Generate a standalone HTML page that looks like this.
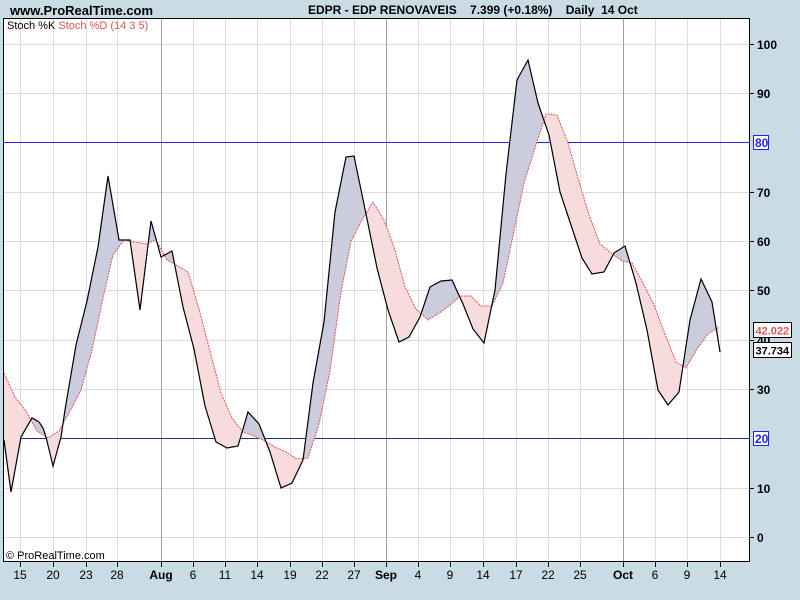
<!DOCTYPE html>
<html><head><meta charset="utf-8"><style>
html,body{margin:0;padding:0;background:#c9dce5;}
svg{display:block;font-family:"Liberation Sans",Arial,sans-serif;}
</style></head><body>
<svg width="800" height="600" viewBox="0 0 800 600" xmlns="http://www.w3.org/2000/svg">
<rect width="800" height="600" fill="#c9dce5"/>
<text x="10" y="15" font-size="13" font-weight="bold" fill="#000">www.ProRealTime.com</text>
<text x="308" y="14" font-size="12" font-weight="bold" fill="#000" xml:space="preserve">EDPR - EDP RENOVAVEIS    7.399 (+0.18%)    Daily  14 Oct</text>
<rect x="3.5" y="18.5" width="746" height="543" fill="#fff" stroke="#000"/>
<g stroke="#dcdcdc" stroke-width="1">
<line x1="4" x2="749" y1="44.5" y2="44.5"/><line x1="4" x2="749" y1="93.5" y2="93.5"/><line x1="4" x2="749" y1="192.5" y2="192.5"/><line x1="4" x2="749" y1="241.5" y2="241.5"/><line x1="4" x2="749" y1="290.5" y2="290.5"/><line x1="4" x2="749" y1="340.5" y2="340.5"/><line x1="4" x2="749" y1="389.5" y2="389.5"/><line x1="4" x2="749" y1="488.5" y2="488.5"/><line x1="4" x2="749" y1="537.5" y2="537.5"/>
<line x1="20.5" x2="20.5" y1="19" y2="561"/><line x1="53.5" x2="53.5" y1="19" y2="561"/><line x1="86.5" x2="86.5" y1="19" y2="561"/><line x1="117.5" x2="117.5" y1="19" y2="561"/><line x1="193.5" x2="193.5" y1="19" y2="561"/><line x1="225.5" x2="225.5" y1="19" y2="561"/><line x1="257.5" x2="257.5" y1="19" y2="561"/><line x1="290.5" x2="290.5" y1="19" y2="561"/><line x1="322.5" x2="322.5" y1="19" y2="561"/><line x1="354.5" x2="354.5" y1="19" y2="561"/><line x1="418.5" x2="418.5" y1="19" y2="561"/><line x1="450.5" x2="450.5" y1="19" y2="561"/><line x1="483.5" x2="483.5" y1="19" y2="561"/><line x1="516.5" x2="516.5" y1="19" y2="561"/><line x1="548.5" x2="548.5" y1="19" y2="561"/><line x1="580.5" x2="580.5" y1="19" y2="561"/><line x1="655.5" x2="655.5" y1="19" y2="561"/><line x1="687.5" x2="687.5" y1="19" y2="561"/><line x1="720.5" x2="720.5" y1="19" y2="561"/>
</g>
<g stroke="#a0a0a0"><line x1="161.5" x2="161.5" y1="19" y2="561"/><line x1="386.5" x2="386.5" y1="19" y2="561"/><line x1="623.5" x2="623.5" y1="19" y2="561"/></g>
<line x1="4" x2="749" y1="142.5" y2="142.5" stroke="#2222ee"/>
<line x1="4" x2="749" y1="438.5" y2="438.5" stroke="#2a2a80"/>
<defs>
<clipPath id="aboveD"><polygon points="4,0 4,373 15,397 26,411 37,431 48,438 59,431 70,411 81,390 92,350 103,298 113,255 124,240 135,242 146,244 156,240 167,260 178,266 188,272 199,309 210,351 221,393 232,418 243,432 254,436 265,441 275,447 286,452 297,459 308,458 319,424 330,371 341,292 351,241 362,220 373,202 384,220 395,250 405,287 416,309 428,320 438,314 449,306 460,296 471,296 481,306 492,306 503,283 514,231 524,183 535,148 546,114 557,115 568,143 578,178 589,215 600,244 611,253 622,261 632,263 643,283 654,305 665,334 676,362 686,368 697,349 708,334 719,327 719,0"/></clipPath>
<clipPath id="belowD"><polygon points="4,600 4,373 15,397 26,411 37,431 48,438 59,431 70,411 81,390 92,350 103,298 113,255 124,240 135,242 146,244 156,240 167,260 178,266 188,272 199,309 210,351 221,393 232,418 243,432 254,436 265,441 275,447 286,452 297,459 308,458 319,424 330,371 341,292 351,241 362,220 373,202 384,220 395,250 405,287 416,309 428,320 438,314 449,306 460,296 471,296 481,306 492,306 503,283 514,231 524,183 535,148 546,114 557,115 568,143 578,178 589,215 600,244 611,253 622,261 632,263 643,283 654,305 665,334 676,362 686,368 697,349 708,334 719,327 719,600"/></clipPath>
</defs>
<polygon clip-path="url(#aboveD)" fill="#ccccdf" points="4,600 4,440 11,492 21,437 32,418 39,422 43,428 46,437 53,466 61,437 65,410 76,345 87,301 98,247 108,176 119,240 130,240 140,310 151,221 161,257 172,251 183,307 194,349 205,406 216,442 227,448 238,446 248,412 259,424 270,452 281,488 292,483 303,460 313,383 324,322 335,212 346,157 354,156 366,214 377,268 388,310 399,342 409,337 420,317 430,287 441,281 452,280 463,304 473,329 484,343 495,290 506,174 517,80 528,60 538,103 549,135 560,192 571,225 582,258 592,274 604,272 614,253 625,246 636,283 647,330 658,390 668,405 679,392 690,320 701,279 712,302 720,352 720,600"/>
<polygon clip-path="url(#belowD)" fill="#f6dcdc" points="4,0 4,440 11,492 21,437 32,418 39,422 43,428 46,437 53,466 61,437 65,410 76,345 87,301 98,247 108,176 119,240 130,240 140,310 151,221 161,257 172,251 183,307 194,349 205,406 216,442 227,448 238,446 248,412 259,424 270,452 281,488 292,483 303,460 313,383 324,322 335,212 346,157 354,156 366,214 377,268 388,310 399,342 409,337 420,317 430,287 441,281 452,280 463,304 473,329 484,343 495,290 506,174 517,80 528,60 538,103 549,135 560,192 571,225 582,258 592,274 604,272 614,253 625,246 636,283 647,330 658,390 668,405 679,392 690,320 701,279 712,302 720,352 720,0"/>
<polyline fill="none" stroke="#e05555" stroke-width="1" stroke-dasharray="2,1" points="4,373 15,397 26,411 37,431 48,438 59,431 70,411 81,390 92,350 103,298 113,255 124,240 135,242 146,244 156,240 167,260 178,266 188,272 199,309 210,351 221,393 232,418 243,432 254,436 265,441 275,447 286,452 297,459 308,458 319,424 330,371 341,292 351,241 362,220 373,202 384,220 395,250 405,287 416,309 428,320 438,314 449,306 460,296 471,296 481,306 492,306 503,283 514,231 524,183 535,148 546,114 557,115 568,143 578,178 589,215 600,244 611,253 622,261 632,263 643,283 654,305 665,334 676,362 686,368 697,349 708,334 719,327"/>
<polyline fill="none" stroke="#000" stroke-width="1.2" points="4,440 11,492 21,437 32,418 39,422 43,428 46,437 53,466 61,437 65,410 76,345 87,301 98,247 108,176 119,240 130,240 140,310 151,221 161,257 172,251 183,307 194,349 205,406 216,442 227,448 238,446 248,412 259,424 270,452 281,488 292,483 303,460 313,383 324,322 335,212 346,157 354,156 366,214 377,268 388,310 399,342 409,337 420,317 430,287 441,281 452,280 463,304 473,329 484,343 495,290 506,174 517,80 528,60 538,103 549,135 560,192 571,225 582,258 592,274 604,272 614,253 625,246 636,283 647,330 658,390 668,405 679,392 690,320 701,279 712,302 720,352"/>
<text x="7" y="29" font-size="11" fill="#000">Stoch %K <tspan fill="#e05555">Stoch %D (14 3 5)</tspan></text>
<text x="6" y="559" font-size="11" fill="#000">© ProRealTime.com</text>
<g stroke="#000">
<line x1="749" x2="754" y1="44.5" y2="44.5"/><line x1="749" x2="754" y1="93.5" y2="93.5"/><line x1="749" x2="754" y1="192.5" y2="192.5"/><line x1="749" x2="754" y1="241.5" y2="241.5"/><line x1="749" x2="754" y1="290.5" y2="290.5"/><line x1="749" x2="754" y1="340.5" y2="340.5"/><line x1="749" x2="754" y1="389.5" y2="389.5"/><line x1="749" x2="754" y1="488.5" y2="488.5"/><line x1="749" x2="754" y1="537.5" y2="537.5"/>
</g>
<g font-size="12" font-weight="bold" fill="#000">
<text x="757" y="49">100</text><text x="757" y="98">90</text><text x="757" y="197">70</text><text x="757" y="246">60</text><text x="757" y="295">50</text><text x="757" y="345">40</text><text x="757" y="394">30</text><text x="757" y="493">10</text><text x="757" y="542">0</text>
</g>
<rect x="753.5" y="135.5" width="15" height="14" fill="#fff" stroke="#2222ee"/><text x="755" y="147" font-size="12" font-weight="bold" fill="#2222ee">80</text>
<rect x="753.5" y="431.5" width="15" height="14" fill="#fff" stroke="#2222ee"/><text x="755" y="443" font-size="12" font-weight="bold" fill="#2222ee">20</text>
<rect x="753.5" y="322.5" width="38" height="15" fill="#fff" stroke="#000"/><text x="755.5" y="334.5" font-size="11" font-weight="bold" fill="#e05555">42.022</text>
<rect x="753.5" y="342.5" width="38" height="15" fill="#fff" stroke="#000"/><text x="755.5" y="354.5" font-size="11" font-weight="bold" fill="#000">37.734</text>
<g stroke="#000">
<line x1="20.5" x2="20.5" y1="562" y2="567"/><line x1="53.5" x2="53.5" y1="562" y2="567"/><line x1="86.5" x2="86.5" y1="562" y2="567"/><line x1="117.5" x2="117.5" y1="562" y2="567"/><line x1="161.5" x2="161.5" y1="562" y2="567"/><line x1="193.5" x2="193.5" y1="562" y2="567"/><line x1="225.5" x2="225.5" y1="562" y2="567"/><line x1="257.5" x2="257.5" y1="562" y2="567"/><line x1="290.5" x2="290.5" y1="562" y2="567"/><line x1="322.5" x2="322.5" y1="562" y2="567"/><line x1="354.5" x2="354.5" y1="562" y2="567"/><line x1="386.5" x2="386.5" y1="562" y2="567"/><line x1="418.5" x2="418.5" y1="562" y2="567"/><line x1="450.5" x2="450.5" y1="562" y2="567"/><line x1="483.5" x2="483.5" y1="562" y2="567"/><line x1="516.5" x2="516.5" y1="562" y2="567"/><line x1="548.5" x2="548.5" y1="562" y2="567"/><line x1="580.5" x2="580.5" y1="562" y2="567"/><line x1="623.5" x2="623.5" y1="562" y2="567"/><line x1="655.5" x2="655.5" y1="562" y2="567"/><line x1="687.5" x2="687.5" y1="562" y2="567"/><line x1="720.5" x2="720.5" y1="562" y2="567"/>
</g>
<g font-size="12" fill="#000" text-anchor="middle">
<text x="20" y="579">15</text><text x="53" y="579">20</text><text x="86" y="579">23</text><text x="117" y="579">28</text><text x="161" y="579" font-weight="bold">Aug</text><text x="193" y="579">6</text><text x="225" y="579">11</text><text x="257" y="579">14</text><text x="290" y="579">19</text><text x="322" y="579">22</text><text x="354" y="579">27</text><text x="386" y="579" font-weight="bold">Sep</text><text x="418" y="579">4</text><text x="450" y="579">9</text><text x="483" y="579">14</text><text x="516" y="579">17</text><text x="548" y="579">22</text><text x="580" y="579">25</text><text x="623" y="579" font-weight="bold">Oct</text><text x="655" y="579">6</text><text x="687" y="579">9</text><text x="720" y="579">14</text>
</g>
</svg>
</body></html>
